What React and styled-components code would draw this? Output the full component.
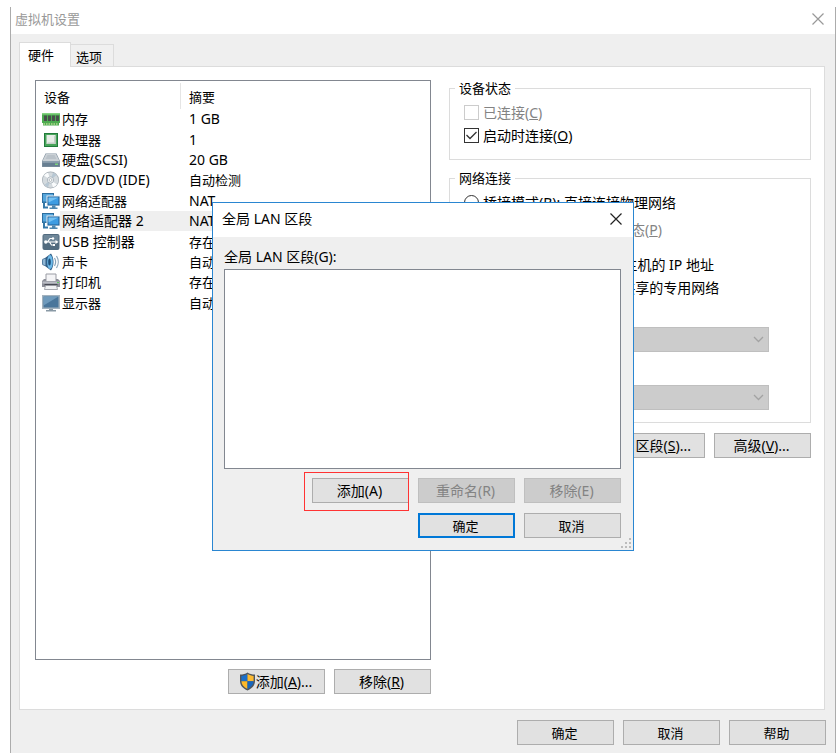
import React from 'react';
import styled, { createGlobalStyle, css } from 'styled-components';

const GlobalStyle = createGlobalStyle`
  * {
    box-sizing: border-box;
  }
  body {
    margin: 0;
    background: #fff;
    color: #000;
    font-family: 'Noto Sans', 'Noto Sans CJK SC', sans-serif;
    font-size: 13px;
    line-height: 16px;
  }
  button,
  select {
    font: inherit;
    color: inherit;
  }
`;

const Label = styled.span`
  font-size: ${(props) => (props.$mixed ? '14px' : '13px')};
`;

// "&" marks the access key. Labels with Latin letters are set one size up.
const Text = ({ children }) => {
  const at = children.indexOf('&');
  const mixed = /[\x20-\x7e]/.test(children);
  if (at < 0) {
    return <Label $mixed={mixed}>{children}</Label>;
  }
  return (
    <Label $mixed={mixed}>
      {children.slice(0, at)}
      <u>{children[at + 1]}</u>
      {children.slice(at + 2)}
    </Label>
  );
};

const Window = styled.div`
  position: relative;
  display: flex;
  flex-direction: column;
  min-height: calc(100vh - 7px);
  margin: 7px 0 0 10px;
  border: solid #acacac;
  border-width: 0 1px;
  background: #efefef;
`;

const TitleBar = styled.header`
  display: flex;
  align-items: center;
  justify-content: space-between;
  height: ${(props) => (props.$dialog ? '34px' : '27px')};
  padding: ${(props) => (props.$dialog ? '0 11px 2px 9px' : '0 11px 3px 4px')};
  background: #fff;
  color: ${(props) => (props.$dialog ? '#000' : '#999')};
`;

const Title = styled.h1`
  margin: 0;
  font-size: 13px;
  font-weight: 400;
`;

const CloseButton = styled.button`
  display: flex;
  padding: 0;
  border: 0;
  background: none;
`;

const Tabs = styled.div`
  display: flex;
  align-items: flex-end;
  height: 32px;
  margin-left: 8px;
`;

const Tab = styled.button`
  height: 22px;
  padding: 2px 11px 0 5px;
  border: 1px solid #dcdcdc;
  border-width: 1px 1px 0 0;
  background: #f0f0f0;
  ${(props) => props.$active && css`
    position: relative;
    height: 25px;
    margin-bottom: -1px;
    padding: 0 16px 0 8px;
    border-width: 1px 1px 0;
    background: #fff;
  `}
`;

const Pane = styled.main`
  display: grid;
  flex: 1;
  grid-template-columns: minmax(0, 396px) minmax(0, 1fr);
  gap: 18px;
  margin: 0 10px 0 8px;
  padding: 13px 13px 15px 15px;
  border: 1px solid #dcdcdc;
  background: #fff;
`;

const Column = styled.div`
  display: flex;
  flex-direction: column;
`;

const ListFrame = styled.div`
  flex: 1;
  border: 1px solid #828790;
`;

const DeviceTable = styled.table`
  width: 100%;
  height: 232px;
  border-collapse: collapse;
  table-layout: fixed;
`;

const HeadCell = styled.th`
  height: 28px;
  padding: 4px 0 0 8px;
  font-weight: 400;
  text-align: left;
  &:first-child {
    width: 145px;
    background: linear-gradient(#e5e5e5, #e5e5e5) right 2px / 1px 26px no-repeat;
  }
`;

const Cell = styled.td`
  padding: 0 0 0 8px;
  background: ${(props) => (props.$selected ? '#efefef' : 'none')};
`;

const NameCell = styled.th`
  padding: 0 0 0 5px;
  font-weight: 400;
  text-align: left;
  background: ${(props) => (props.$selected ? 'linear-gradient(#efefef, #efefef) 24px 0 no-repeat' : 'none')};
`;

const Device = styled.div`
  display: flex;
  align-items: center;
  gap: 1px;
`;

const DeviceIcon = styled.svg`
  flex: none;
  width: 20px;
  height: 18px;
`;

const ButtonRow = styled.div`
  display: flex;
  justify-content: flex-end;
  gap: 9px;
  margin-top: ${(props) => props.$top || 0}px;
`;

const Button = styled.button`
  display: flex;
  align-items: center;
  justify-content: center;
  width: ${(props) => (props.$wide ? '112px' : '97px')};
  height: 25px;
  padding: 0 2px 0 0;
  border: 1px solid #adadad;
  background: #e1e1e1;
  white-space: nowrap;
  &:disabled {
    border-color: #bfbfbf;
    background: #ccc;
    color: #838383;
  }
  ${(props) => props.$default && css`
    border: 2px solid #0078d7;
  `}
`;

const Group = styled.fieldset`
  min-width: 0;
  margin: 0 0 10px;
  padding: 5px 14px 12px;
  border: 1px solid #dcdcdc;
`;

const Legend = styled.legend`
  margin-left: -9px;
  padding: 0 4px;
  line-height: 16px;
`;

const Option = styled.label`
  display: flex;
  align-items: center;
  gap: 4px;
  height: 23px;
  margin: ${(props) => props.$margin || 0};
  padding-left: ${(props) => (props.$nested ? '22px' : 0)};
  color: ${(props) => (props.$disabled ? '#838383' : '#000')};
  white-space: nowrap;
`;

const Tick = styled.input`
  flex: none;
  width: 15px;
  height: 15px;
  margin: 0;
  appearance: none;
  border: 1px solid #333;
  border-radius: ${(props) => (props.type === 'radio' ? '50%' : 0)};
  background: #fff;
  &:disabled {
    border-color: #ccc;
  }
  &[type='checkbox']:checked {
    background: url("data:image/svg+xml,%3Csvg xmlns='http://www.w3.org/2000/svg' viewBox='0 0 13 13'%3E%3Cpath d='M1.5 6l3.5 3.5L11.5 3' fill='none' stroke='%23333' stroke-width='1.3'/%3E%3C/svg%3E");
  }
  &[type='radio']:checked {
    background: radial-gradient(#333 3px, #fff 4px);
  }
`;

const SelectBox = styled.div`
  display: grid;
  align-items: center;
  margin: 5px 27px 0 19px;
  svg {
    grid-area: 1 / 1;
    justify-self: end;
    margin-right: 5px;
    pointer-events: none;
  }
`;

const Select = styled.select`
  grid-area: 1 / 1;
  width: 100%;
  height: 25px;
  padding: 0 6px;
  appearance: none;
  border: 1px solid #bfbfbf;
  border-radius: 0;
  background: #ccc;
  &:disabled {
    opacity: 1;
    color: #838383;
  }
`;

const Footer = styled.footer`
  padding: 10px 9px 8px;
`;

const Overlay = styled.div`
  position: absolute;
  inset: 195px 0 auto;
  display: flex;
  justify-content: center;
`;

const Dialog = styled.section`
  position: relative;
  width: 422px;
  border: 1px solid #2a86d1;
  background: #efefef;
`;

const DialogBody = styled.div`
  padding: 12px 12px 12px 11px;
`;

const SegmentLabel = styled.label`
  display: block;
  padding-bottom: 4px;
`;

const SegmentList = styled.select`
  display: block;
  width: 100%;
  height: 200px;
  border: 1px solid #828790;
  border-radius: 0;
  outline: 0;
  background: #fff;
`;

const Marked = styled.div`
  position: relative;
  &::after {
    content: '';
    position: absolute;
    inset: -6px 0 -8px -8px;
    border: 1px solid #ff3333;
    pointer-events: none;
  }
`;

const Grip = styled.svg`
  position: absolute;
  right: 2px;
  bottom: 2px;
`;

const CloseIcon = ({ color }) => (
  <svg width='12' height='12' viewBox='0 0 12 12'>
    <path d='M0.5 0.5l11 11M11.5 0.5l-11 11' stroke={color} strokeWidth='1.2' />
  </svg>
);

const Chevron = () => (
  <svg width='11' height='7' viewBox='0 0 11 7'>
    <path d='M1 1l4.5 4.5L10 1' fill='none' stroke='#a3a3a3' strokeWidth='1.3' />
  </svg>
);

const Shield = () => (
  <svg width='17' height='19' viewBox='0 0 17 19'>
    <path d='M8.5 0.5C6.5 2 4 2.6 1 2.6V9c0 4.5 3 7.5 7.5 9.5C13 16.5 16 13.5 16 9V2.6C13 2.6 10.5 2 8.5 0.5z' fill='#50565c' />
    <path d='M8.5 2C6.5 3.2 4.5 3.8 2.4 3.9v5.4h6.1z' fill='#1b6fc9' />
    <path d='M8.5 2c2 1.2 4 1.8 6.1 1.9v5.4H8.5z' fill='#fdbb31' />
    <path d='M2.4 9.3h6.1v7.6c-3.8-1.7-5.9-4.2-6.1-7.6z' fill='#fdb92a' />
    <path d='M14.6 9.3H8.5v7.6c3.8-1.7 5.9-4.2 6.1-7.6z' fill='#1766bd' />
  </svg>
);

const icons = {
  memory: (
    <>
      <path d='M1 3h18v10h-1v2.5H2V13H1z' fill='#4cab50' />
      <path d='M1 3h18v1.5H1z' fill='#86d383' />
      <path d='M3 5.5h3V11H3zM7 5.5h3V11H7zM11 5.5h3V11h-3zM15 5.5h3V11h-3z' fill='#48504c' />
      <path d='M2.5 14h15' stroke='#b5d98f' strokeWidth='1.5' strokeDasharray='1.5 1' />
    </>
  ),
  cpu: (
    <>
      <path d='M3 2h14v14H3z' fill='#217b3b' />
      <path d='M4 3h12v12H4z' fill='#49a45b' />
      <path d='M5.5 4h9v9h-9z' fill='#e8ede8' />
      <path d='M5.5 13h9V4L13 5.5v6H7z' fill='#c6cec8' />
    </>
  ),
  disk: (
    <>
      <path d='M4.5 2.5h11L19 10v6H1v-6z' fill='#8494a2' />
      <path d='M5 3h10l3.5 7h-17z' fill='#cbd1d6' />
      <path d='M6.5 4h7l2 4h-11z' fill='#bac2c9' />
      <path d='M1.5 10.5h17v5h-17z' fill='#677e91' />
      <path d='M1.5 10.5h17v1h-17z' fill='#a8b7c3' />
      <path d='M14 12.5h3V14h-3z' fill='#7ed27c' />
    </>
  ),
  cd: (
    <>
      <circle cx='9.5' cy='9' r='8.5' fill='#a2abb2' />
      <circle cx='9.5' cy='9' r='7.8' fill='#d4dade' />
      <path d='M9.5 9L3 4.5a8 8 0 0 1 4-2.8zM9.5 9l6.500 4.500a8 8 0 0 1-4 2.800z' fill='#fafcfd' />
      <path d='M9.5 9l2.5-7.3a8 8 0 0 1 3.5 2.400zM9.5 9L7 16.3a8 8 0 0 1-3.5-2.500z' fill='#b7c7d3' />
      <circle cx='9.5' cy='9' r='3.2' fill='#eef1f3' stroke='#a4afb7' strokeWidth='0.8' />
      <circle cx='9.5' cy='9' r='1.4' fill='#fff' stroke='#8d989f' strokeWidth='0.6' />
    </>
  ),
  network: (
    <>
      <path d='M1 1h12v10H1z' fill='#2d6e9f' />
      <path d='M2 2h10v7.5H2z' fill='#56a6dc' />
      <path d='M3 10v5.5h4' fill='none' stroke='#3679a8' strokeWidth='2' />
      <path d='M5.5 3.5H19V14H5.5z' fill='#e6f1f8' />
      <path d='M6.5 4.5h12v9h-12z' fill='#235f94' />
      <path d='M7.5 5.5h10v7h-10z' fill='#3e9ce2' />
      <path d='M7.5 5.5h10l-10 5z' fill='#75c2f3' />
      <path d='M11 13.5h3.500v2h2V17h-8v-1.500H11z' fill='#4e87b0' />
    </>
  ),
  usb: (
    <>
      <rect x='1.5' y='1' width='17' height='16' rx='2' fill='#526b7f' />
      <path d='M2.5 2h15v7h-15z' fill='#6f8799' />
      <path d='M4 9h11M6.5 9L9 5.5h3M8.5 9l2 3H13' fill='none' stroke='#fff' strokeWidth='1.2' />
      <circle cx='4.8' cy='9' r='1.7' fill='#fff' />
      <path d='M14.5 7l3 2-3 2z' fill='#fff' />
      <circle cx='12' cy='5.5' r='1.2' fill='#fff' />
      <path d='M12 11h2v2h-2z' fill='#fff' />
    </>
  ),
  sound: (
    <>
      <path d='M1.5 6L4 5l6-4.5c1.5 2 2.5 5 2.5 8.5s-1 6.5-2.5 8.5L4 13l-2.5-1C.8 10 .8 8 1.5 6z' fill='#315f88' />
      <path d='M2 6.5l2.5-1v7l-2.5-1c-.5-1.5-.5-3.500 0-5z' fill='#8fb6d4' />
      <ellipse cx='9' cy='9' rx='2.8' ry='7' fill='#6ebae9' />
      <ellipse cx='8.5' cy='9' rx='1.3' ry='3.5' fill='#1d4e79' />
      <path d='M13.5 5c1.3 2.3 1.3 5.7 0 8M15.5 3c2.3 3.5 2.3 8.5 0 12' fill='none' stroke='#8ba4b8' strokeWidth='1.2' />
    </>
  ),
  printer: (
    <>
      <path d='M5 1h10v8H5z' fill='#f4f4f6' stroke='#9a9ca4' />
      <path d='M3 6h2v2h10V6h2l2 2v6H1V8z' fill='#8d8f99' />
      <path d='M1.5 8.5h17v2h-17z' fill='#bbbdc5' />
      <path d='M3.5 11h13v1.5h-13z' fill='#484a54' />
      <path d='M4.5 12.5h11l1 4h-13z' fill='#f1f2f4' stroke='#92949d' strokeWidth='0.8' />
      <path d='M16 9h2v1h-2z' fill='#5fc763' />
    </>
  ),
  display: (
    <>
      <path d='M1 1h18v14H1z' fill='#a3b2be' />
      <path d='M2.5 2.5h15v11h-15z' fill='#4a769b' />
      <path d='M2.5 2.5h15l-15 9z' fill='#6f9abc' />
      <path d='M8 15h4v1h3v1.5H5V16h3z' fill='#8999a5' />
    </>
  ),
};

const devices = [
  { icon: 'memory', name: '内存', summary: '1 GB' },
  { icon: 'cpu', name: '处理器', summary: '1' },
  { icon: 'disk', name: '硬盘(SCSI)', summary: '20 GB' },
  { icon: 'cd', name: 'CD/DVD (IDE)', summary: '自动检测' },
  { icon: 'network', name: '网络适配器', summary: 'NAT' },
  { icon: 'network', name: '网络适配器 2', summary: 'NAT', selected: true },
  { icon: 'usb', name: 'USB 控制器', summary: '存在' },
  { icon: 'sound', name: '声卡', summary: '自动检测' },
  { icon: 'printer', name: '打印机', summary: '存在' },
  { icon: 'display', name: '显示器', summary: '自动检测' },
];

const DeviceList = () => (
  <ListFrame>
    <DeviceTable>
      <thead>
        <tr>
          <HeadCell scope='col'>设备</HeadCell>
          <HeadCell scope='col'>摘要</HeadCell>
        </tr>
      </thead>
      <tbody>
        {devices.map((device, i) => (
          <tr key={i}>
            <NameCell scope='row' $selected={device.selected}>
              <Device>
                <DeviceIcon viewBox='0 0 20 18'>{icons[device.icon]}</DeviceIcon>
                <Text>{device.name}</Text>
              </Device>
            </NameCell>
            <Cell $selected={device.selected}><Text>{device.summary}</Text></Cell>
          </tr>
        ))}
      </tbody>
    </DeviceTable>
  </ListFrame>
);

const DeviceStatus = () => (
  <Group>
    <Legend>设备状态</Legend>
    <Option $disabled>
      <Tick type='checkbox' disabled />
      <Text>已连接(&C)</Text>
    </Option>
    <Option>
      <Tick type='checkbox' defaultChecked />
      <Text>启动时连接(&O)</Text>
    </Option>
  </Group>
);

const NetworkConnection = () => (
  <Group>
    <Legend>网络连接</Legend>
    <Option>
      <Tick type='radio' name='connection' />
      <Text>桥接模式(&B): 直接连接物理网络</Text>
    </Option>
    <Option $nested $disabled $margin='4px 0 12px'>
      <Tick type='checkbox' disabled />
      <Text>复制物理网络连接状态(&P)</Text>
    </Option>
    <Option>
      <Tick type='radio' name='connection' defaultChecked />
      <Text>NAT 模式(&N): 用于共享主机的 IP 地址</Text>
    </Option>
    <Option>
      <Tick type='radio' name='connection' />
      <Text>仅主机模式(&H): 与主机共享的专用网络</Text>
    </Option>
    <Option>
      <Tick type='radio' name='connection' />
      <Text>自定义(&U):特定虚拟网络</Text>
    </Option>
    <SelectBox>
      <Select aria-label='特定虚拟网络' disabled />
      <Chevron />
    </SelectBox>
    <Option $margin='5px 0 0'>
      <Tick type='radio' name='connection' />
      <Text>LAN 区段(&L):</Text>
    </Option>
    <SelectBox>
      <Select aria-label='LAN 区段' disabled />
      <Chevron />
    </SelectBox>
  </Group>
);

const LanSegmentDialog = () => (
  <Dialog role='dialog' aria-labelledby='lan-title'>
    <TitleBar $dialog>
      <Title id='lan-title'><Text>全局 LAN 区段</Text></Title>
      <CloseButton aria-label='关闭'><CloseIcon color='#222' /></CloseButton>
    </TitleBar>
    <DialogBody>
      <SegmentLabel htmlFor='segments'><Text>全局 LAN 区段(G):</Text></SegmentLabel>
      <SegmentList id='segments' size='10' />
      <ButtonRow $top={9}>
        <Marked>
          <Button><Text>添加(A)</Text></Button>
        </Marked>
        <Button disabled><Text>重命名(R)</Text></Button>
        <Button disabled><Text>移除(E)</Text></Button>
      </ButtonRow>
      <ButtonRow $top={10}>
        <Button $default>确定</Button>
        <Button>取消</Button>
      </ButtonRow>
    </DialogBody>
    <Grip width='10' height='10' viewBox='0 0 10 10' fill='#bcbcbc'>
      <path d='M8 0h2v2H8zM4 4h2v2H4zM8 4h2v2H8zM0 8h2v2H0zM4 8h2v2H4zM8 8h2v2H8z' />
    </Grip>
  </Dialog>
);

const App = () => (
  <>
    <GlobalStyle />
    <Window>
      <TitleBar>
        <Title>虚拟机设置</Title>
        <CloseButton aria-label='关闭'><CloseIcon color='#999' /></CloseButton>
      </TitleBar>
      <Tabs role='tablist'>
        <Tab role='tab' aria-selected='true' $active>硬件</Tab>
        <Tab role='tab' aria-selected='false'>选项</Tab>
      </Tabs>
      <Pane>
        <Column>
          <DeviceList />
          <ButtonRow $top={9}>
            <Button><Shield /><Text>添加(&A)...</Text></Button>
            <Button><Text>移除(&R)</Text></Button>
          </ButtonRow>
        </Column>
        <Column>
          <DeviceStatus />
          <NetworkConnection />
          <ButtonRow>
            <Button $wide><Text>LAN 区段(&S)...</Text></Button>
            <Button><Text>高级(&V)...</Text></Button>
          </ButtonRow>
        </Column>
      </Pane>
      <Footer>
        <ButtonRow>
          <Button>确定</Button>
          <Button>取消</Button>
          <Button>帮助</Button>
        </ButtonRow>
      </Footer>
      <Overlay>
        <LanSegmentDialog />
      </Overlay>
    </Window>
  </>
);

export default App;
